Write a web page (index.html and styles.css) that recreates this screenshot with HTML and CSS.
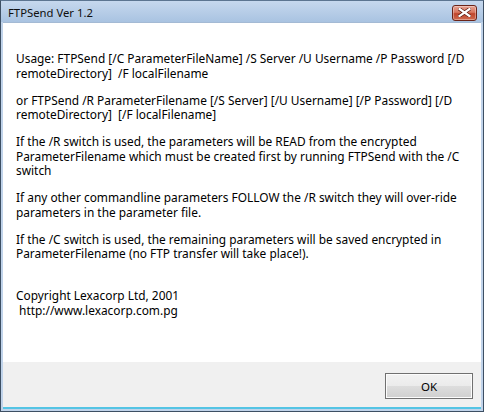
FILE: index.html
```html
<!DOCTYPE html>
<html lang="en">
<head>
    <meta charset="UTF-8">
    <title>FTPSend Ver 1.2</title>
    <link rel="stylesheet" href="styles.css">
</head>
<body>

    <div class="window">
        <!-- Title bar -->
        <div class="titlebar">
            <span class="title">FTPSend Ver 1.2</span>
            <button class="close-btn" aria-label="Close">
                <svg width="13" height="9" viewBox="0 0 13 9">
                    <path d="M1.5 1 L11.5 8 M11.5 1 L1.5 8" stroke="#5a1a10" stroke-width="3.6" stroke-linecap="square"/>
                    <path d="M1.5 1 L11.5 8 M11.5 1 L1.5 8" stroke="#ffffff" stroke-width="2.2" stroke-linecap="square"/>
                </svg>
            </button>
        </div>

        <!-- Message -->
        <div class="client">
            <p>Usage: FTPSend [/C ParameterFileName] /S Server /U Username /P Password [/D<br>remoteDirectory]&nbsp; /F localFilename</p>
            <p>or FTPSend /R ParameterFilename [/S Server] [/U Username] [/P Password] [/D<br>remoteDirectory]&nbsp; [/F localFilename]</p>
            <p>If the /R switch is used, the parameters will be READ from the encrypted<br>ParameterFilename which must be created first by running FTPSend with the /C<br>switch</p>
            <p>If any other commandline parameters FOLLOW the /R switch they will over-ride<br>parameters in the parameter file.</p>
            <p>If the /C switch is used, the remaining parameters will be saved encrypted in<br>ParameterFilename (no FTP transfer will take place!).</p>
            <p class="copyright">Copyright Lexacorp Ltd, 2001<br>&nbsp;http://www.lexacorp.com.pg</p>
        </div>

        <!-- Buttons -->
        <div class="footer">
            <button class="ok-btn">OK</button>
        </div>
    </div>

</body>
</html>
```

FILE: styles.css
```css
html, body {
    margin: 0;
    padding: 0;
    background: #ffffff;
}
body {
    font-family: "Noto Sans", "Open Sans", sans-serif;
    font-size: 11.9px;
    color: #000000;
}
.window {
    width: 484px;
    height: 412px;
    box-sizing: border-box;
    display: flex;
    flex-direction: column;
    border-left: 1px solid #3d4f63;
    border-right: 1px solid #3d4f63;
    border-bottom: 1px solid #3d4f63;
    border-top: 1px solid #5c7591;
    background: #c0d3ea;
    padding: 0 2px 2px 2px;
}
.titlebar {
    height: 21px;
    display: flex;
    align-items: center;
    justify-content: space-between;
    background: linear-gradient(#c6d8ee, #a9c3e1);
    margin: 0 -2px;
    padding: 0 6px 0 7px;
}
.title {
    font-size: 11.3px;
    color: #0f0f0f;
    padding-top: 1px;
}
.close-btn {
    width: 25px;
    height: 16px;
    padding: 0;
    margin-top: 2px;
    border: 1px solid #6b2419;
    border-radius: 3px;
    background: linear-gradient(#e7a394 0%, #d8765f 45%, #c0452c 55%, #cf6a4f 100%);
    box-shadow: inset 0 0 0 1px rgba(255, 255, 255, 0.35);
    display: flex;
    align-items: center;
    justify-content: center;
}
.client {
    flex: 1;
    background: #ffffff;
    padding: 28px 0 0 13px;
    border-top: 1px solid #a4bad4;
}
.client p {
    margin: 0 0 12.5px 0;
    line-height: 14.5px;
    white-space: nowrap;
}
.client p.copyright {
    margin-top: 27.5px;
}
.footer {
    height: 47px;
    background: #f0f0f0;
    border-bottom: 2px solid #54c4e4;
    display: flex;
    justify-content: flex-end;
    align-items: flex-start;
    padding: 11px 8px 0 0;
    box-sizing: border-box;
}
.ok-btn {
    width: 88px;
    height: 26px;
    font-family: "Noto Sans", "Open Sans", sans-serif;
    font-size: 11.5px;
    color: #000000;
    background: linear-gradient(#f2f2f2 0%, #ebebeb 50%, #dddddd 51%, #cfcfcf 100%);
    border: 1px solid #707070;
    border-radius: 0;
    box-shadow: inset 0 0 0 1px #fcfcfc;
    padding: 0;
}
```
